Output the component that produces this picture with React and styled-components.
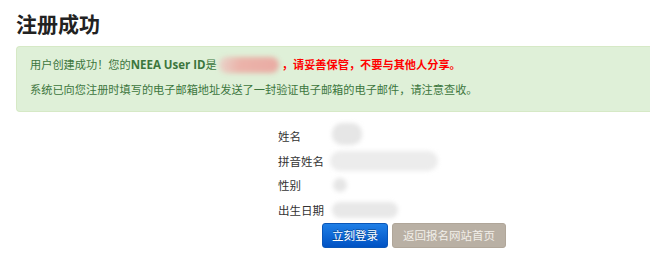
import React from "react";
import styled, { createGlobalStyle } from "styled-components";

const Global = createGlobalStyle`
  html, body { margin: 0; padding: 0; background: #fff; overflow: hidden; }
  body { font-family: "Open Sans", "Noto Sans CJK SC", sans-serif; }
`;

const Page = styled.div`
  padding: 9px 0 0 16px;
`;

const Title = styled.h3`
  margin: 0;
  font-family: "Noto Sans CJK SC", sans-serif;
  font-size: 21px;
  line-height: 28px;
  font-weight: 700;
  color: #222;
`;

const Alert = styled.div`
  margin-top: 9px;
  border: 1px solid #d6e9c6;
  border-right: none;
  border-radius: 4px 0 0 4px;
  background: #dff0d8;
  color: #3c763d;
  padding: 5px 13px 9px;
  font-size: 11.2px;
  line-height: 25px;
  font-family: "Noto Sans CJK SC", sans-serif;
`;

const Line = styled.div`
  display: flex;
  align-items: center;
  white-space: nowrap;
`;

const Brand = styled.b`
  font-family: "Open Sans", sans-serif;
  font-weight: 700;
  font-size: 11.5px;
`;

const Warn = styled.b`
  color: #f00;
  font-weight: 700;
`;

const Blur = styled.span`
  display: inline-block;
  width: ${(p) => p.$w}px;
  height: ${(p) => p.$h}px;
  border-radius: ${(p) => p.$r || 8}px;
  background: ${(p) => p.$bg || "#e4e4e4"};
  filter: blur(${(p) => p.$b || 2}px);
  margin: ${(p) => p.$m || "0"};
`;

const Info = styled.div`
  margin: 12px 0 0 262px;
  display: grid;
  grid-template-columns: 55px auto;
  font-family: "Noto Sans CJK SC", sans-serif;
  font-size: 11.5px;
  line-height: 24.6px;
  color: #333;
`;

const Label = styled.div``;

const Value = styled.div`
  display: flex;
  align-items: center;
`;

const Actions = styled.div`
  margin: 1px 0 0 306px;
  display: flex;
  gap: 4px;
`;

const Button = styled.button`
  height: 25px;
  padding: 0 ${(p) => (p.$primary ? 9 : 10)}px;
  border: 1px solid ${(p) => (p.$primary ? "#0a56b8" : "#b0a699")};
  border-radius: 3px;
  font-family: "Noto Sans CJK SC", sans-serif;
  font-size: 11.5px;
  line-height: 23px;
  cursor: pointer;
  color: ${(p) => (p.$primary ? "#fff" : "#f2efe9")};
  text-shadow: ${(p) => (p.$primary ? "0 -1px 0 rgba(0,0,0,0.35)" : "none")};
  background: ${(p) =>
    p.$primary ? "linear-gradient(#1f7fe6, #0052c4)" : "#b9b0a4"};
`;

export default function App() {
  return (
    <>
      <Global />
      <Page>
        <Title>注册成功</Title>
        <Alert>
          <Line>
            用户创建成功！您的<Brand>NEEA User ID</Brand>是
            <Blur
              $w={60}
              $h={16}
              $r={8}
              $b={2.5}
              $m="0 3px 0 2px"
              $bg="linear-gradient(100deg, #e8d6cc 0%, #ebb3aa 35%, #e9aba3 100%)"
            />
            <Warn>，请妥善保管，不要与其他人分享。</Warn>
          </Line>
          <Line>系统已向您注册时填写的电子邮箱地址发送了一封验证电子邮箱的电子邮件，请注意查收。</Line>
        </Alert>
        <Info>
          <Label>姓名</Label>
          <Value>
            <Blur $w={30} $h={22} $r={10} $bg="#e6e6e6" $m="-4px 0 0 -1px" />
          </Value>
          <Label>拼音姓名</Label>
          <Value>
            <Blur $w={108} $h={20} $r={10} $bg="#ececec" $m="0 0 0 -3px" />
          </Value>
          <Label>性别</Label>
          <Value>
            <Blur $w={14} $h={14} $r={7} $bg="#e6e6e6" />
          </Value>
          <Label>出生日期</Label>
          <Value>
            <Blur $w={66} $h={16} $r={8} $bg="#e8e8e8" $m="0 0 0 -1px" />
          </Value>
        </Info>
        <Actions>
          <Button $primary>立刻登录</Button>
          <Button>返回报名网站首页</Button>
        </Actions>
      </Page>
    </>
  );
}
